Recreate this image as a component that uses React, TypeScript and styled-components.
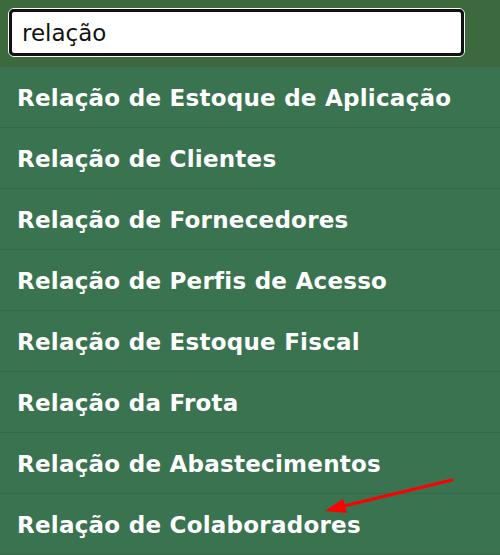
import React from 'react';
import styled, { createGlobalStyle } from 'styled-components';

const GlobalStyle = createGlobalStyle`
  html, body {
    margin: 0;
    padding: 0;
    background: #3a7350;
    overflow: hidden;
  }
`;

const SPanel = styled.div`
  width: 500px;
  height: 555px;
  display: flex;
  flex-direction: column;
  background: #3a7350;
  position: relative;
  overflow: hidden;
`;

const SHeader = styled.div`
  height: 68px;
  box-sizing: border-box;
  padding: 8px 35px 10px 8px;
  background: #3c6a3e;
  display: flex;
`;

const SSearch = styled.div`
  flex: 1;
  border: 1px solid #ffffff;
  border-radius: 6px;
  display: flex;
`;

const SInput = styled.input`
  flex: 1;
  border: 3px solid #111111;
  border-radius: 5px;
  background: #ffffff;
  font-family: 'DejaVu Sans', Verdana, sans-serif;
  font-size: 23px;
  color: #111111;
  padding: 0 0 0 10px;
  outline: none;
`;

const SList = styled.ul`
  list-style: none;
  margin: 0;
  padding: 0;
`;

const SItem = styled.li`
  height: 61px;
  box-sizing: border-box;
  display: flex;
  align-items: center;
  padding: 2px 0 0 17px;
  border-bottom: 1px solid #346a47;
  font-family: 'DejaVu Sans', Verdana, sans-serif;
  font-weight: bold;
  font-size: 23px;
  letter-spacing: 0.25px;
  color: #ffffff;
  white-space: nowrap;
`;

const SArrow = styled.svg`
  position: absolute;
  left: 320px;
  top: 475px;
  width: 140px;
  height: 50px;
`;

const items = [
  'Relação de Estoque de Aplicação',
  'Relação de Clientes',
  'Relação de Fornecedores',
  'Relação de Perfis de Acesso',
  'Relação de Estoque Fiscal',
  'Relação da Frota',
  'Relação de Abastecimentos',
  'Relação de Colaboradores',
];

const App = () => {
  return (
    <SPanel>
      <GlobalStyle />
      <SHeader>
        <SSearch>
          <SInput defaultValue='relação' />
        </SSearch>
      </SHeader>
      <SList>
        {items.map((item) => (
          <SItem key={item}>{item}</SItem>
        ))}
      </SList>
      <SArrow viewBox='0 0 140 50'>
        <line x1='132' y1='5' x2='24' y2='31' stroke='#f00' strokeWidth='3' strokeLinecap='round' />
        <polygon points='5,36 27,38 23,24' fill='#f00' />
      </SArrow>
    </SPanel>
  );
};

export default App;
